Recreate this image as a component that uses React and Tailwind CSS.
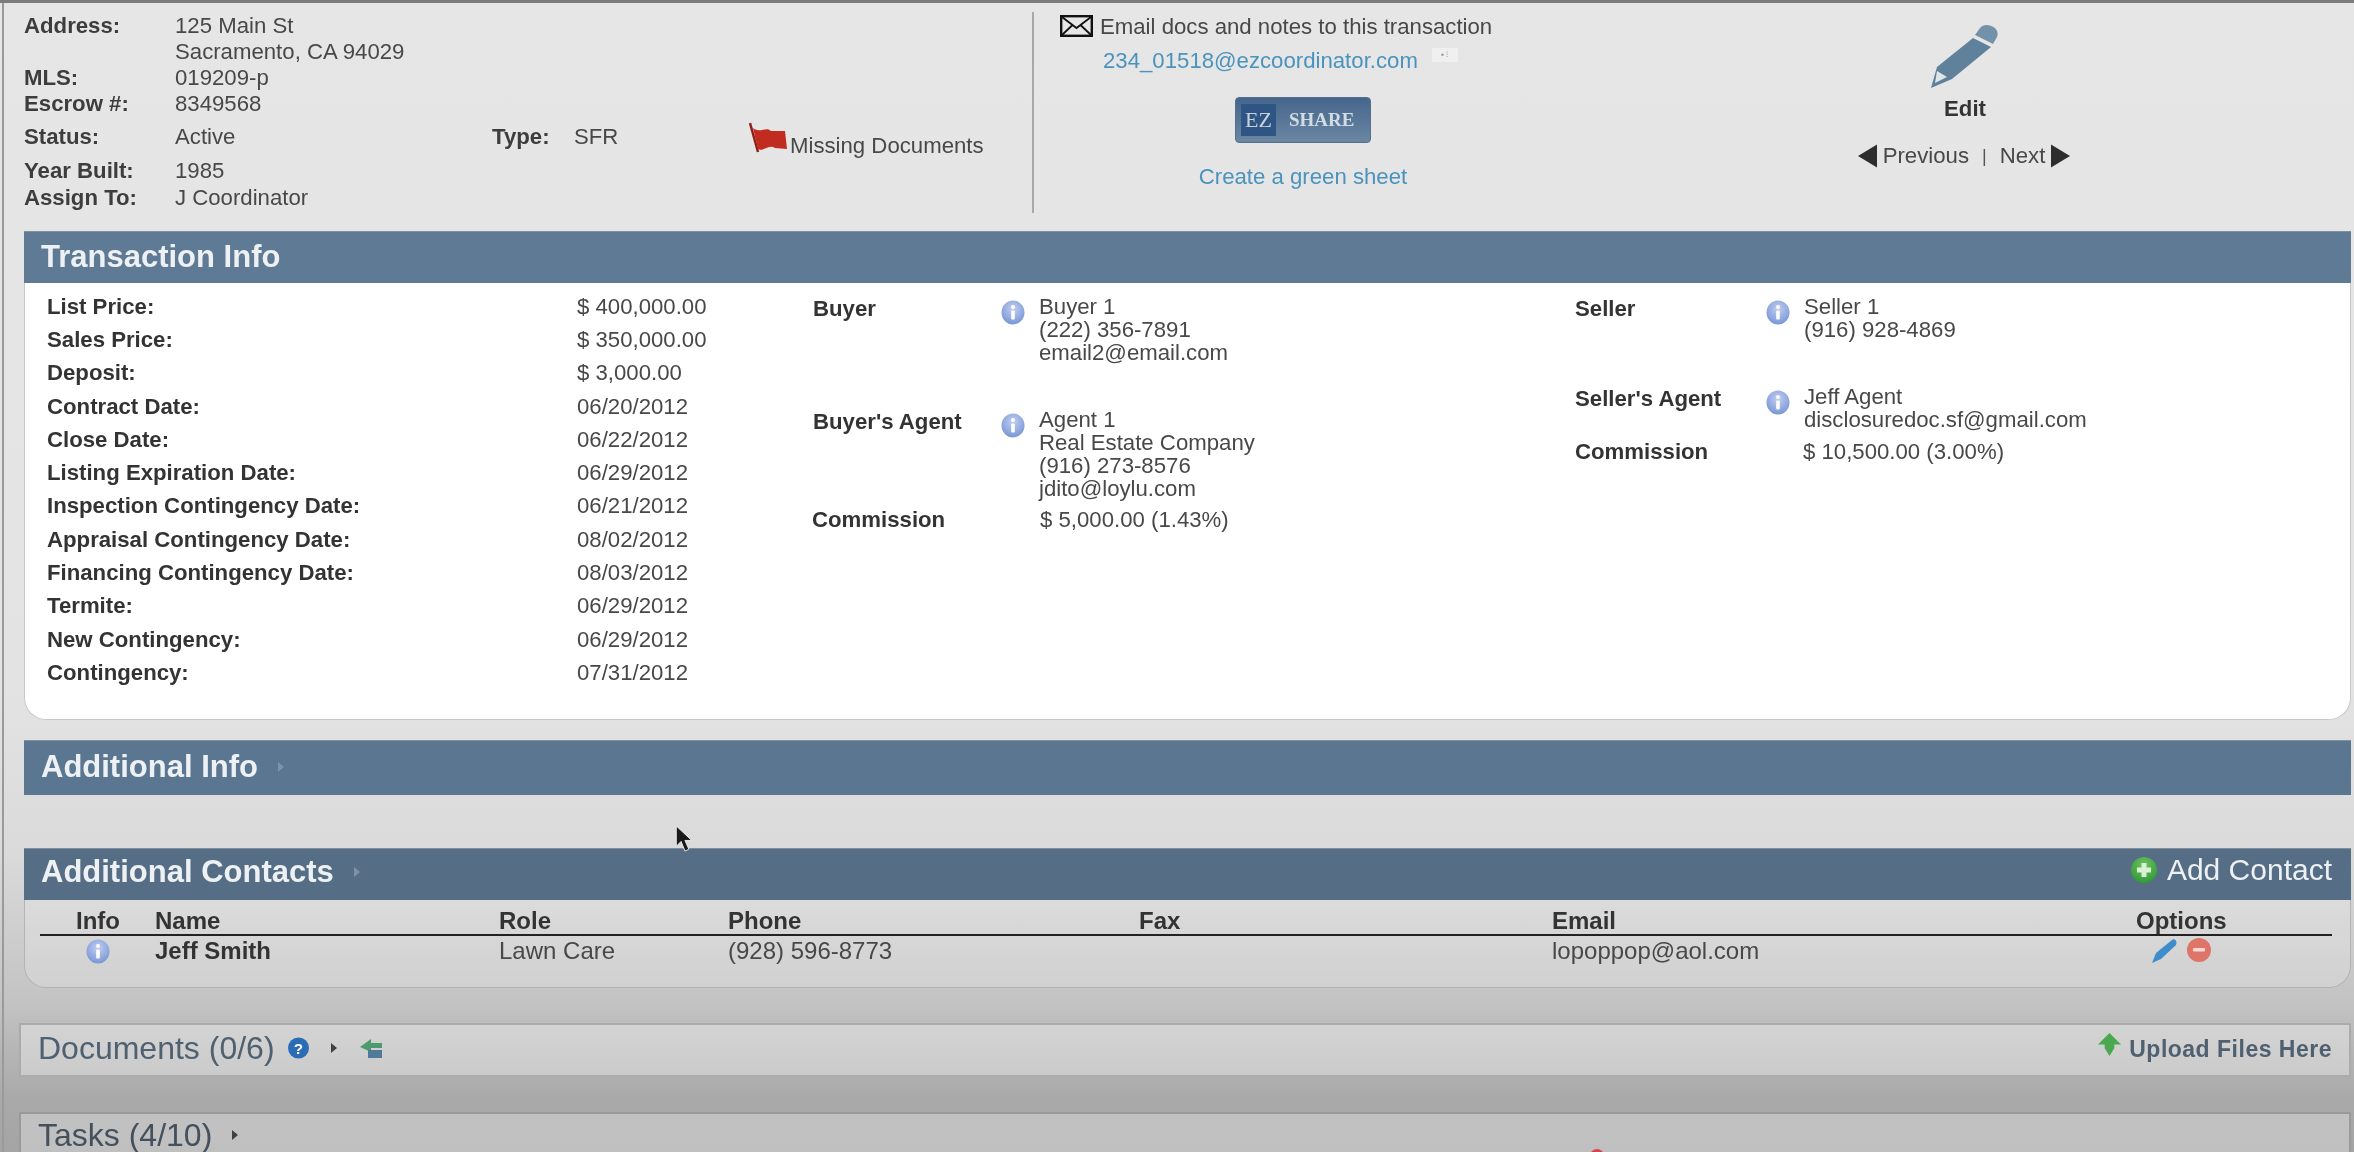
import React from "react";

const font = { fontFamily: '"Liberation Sans", Arial, sans-serif' };

function Info({ className = "" }) {
  return (
    <svg viewBox="0 0 24 25" className={"w-[24px] h-[25px] shrink-0 " + className}>
      <defs>
        <radialGradient id="ig" cx="50%" cy="35%" r="70%">
          <stop offset="0%" stopColor="#c3cff0" />
          <stop offset="100%" stopColor="#7292d4" />
        </radialGradient>
      </defs>
      <ellipse cx="12" cy="12.5" rx="11.5" ry="12" fill="url(#ig)" />
      <circle cx="12" cy="7" r="2" fill="#fff" />
      <rect x="10.2" y="10.5" width="3.6" height="9" rx="1" fill="#fff" />
    </svg>
  );
}

function Bar({ title, arrow, right, className }) {
  return (
    <div className={"flex items-center justify-between border-t border-[#7f8f9d] pl-[17px] pr-[19px] " + className}>
      <div className="flex items-center">
        <span className="text-[31px] font-bold text-[#eef1f4] leading-[36px]">{title}</span>
        {arrow && (
          <svg viewBox="0 0 6 10" className="w-[6px] h-[10px] ml-[20px]">
            <path d="M0 0 L6 5 L0 10 Z" fill="#7d93a8" />
          </svg>
        )}
      </div>
      {right}
    </div>
  );
}

const dates = [
  ["List Price:", "$ 400,000.00"],
  ["Sales Price:", "$ 350,000.00"],
  ["Deposit:", "$ 3,000.00"],
  ["Contract Date:", "06/20/2012"],
  ["Close Date:", "06/22/2012"],
  ["Listing Expiration Date:", "06/29/2012"],
  ["Inspection Contingency Date:", "06/21/2012"],
  ["Appraisal Contingency Date:", "08/02/2012"],
  ["Financing Contingency Date:", "08/03/2012"],
  ["Termite:", "06/29/2012"],
  ["New Contingency:", "06/29/2012"],
  ["Contingency:", "07/31/2012"],
];

function Party({ label, lines, h, labelW }) {
  return (
    <div className={"flex " + h}>
      <div className={"font-bold text-[#333] leading-[24px] mt-[8px] shrink-0 " + labelW}>{label}</div>
      <Info className="mt-[11px]" />
      <div className="ml-[14px] leading-[23px] mt-[6px]">
        {lines.map((l) => (
          <div key={l}>{l}</div>
        ))}
      </div>
    </div>
  );
}

function Commission({ value, className }) {
  return (
    <div className={"flex leading-[24px] " + className}>
      <div className="font-bold text-[#333] shrink-0 w-[228px]">Commission</div>
      <div>{value}</div>
    </div>
  );
}

const hdrRows = [
  ["Address:", "125 Main St"],
  ["", "Sacramento, CA 94029"],
  ["MLS:", "019209-p"],
  ["Escrow #:", "8349568"],
];

const cols = "grid grid-cols-[115px_344px_229px_411px_413px_584px_1fr]";

export default function App() {
  return (
    <div
      style={font}
      className="relative h-[1152px] w-[2354px] overflow-hidden text-[22.2px] leading-[24px] text-[#484848] border-t-[3px] border-[#7c7c7c] blur-[0.4px] bg-[linear-gradient(180deg,#e6e6e6_0%,#e3e3e3_60%,#dadada_74%,#c3c3c3_87%,#aaaaaa_95%,#a4a4a4_100%)]"
    >
      <div className="border-l-[2px] border-[#9a9a9a] h-full ml-[2px] pl-[20px] pr-[3px]">
        {/* top header */}
        <div className="h-[228px] flex">
          <div className="w-[1008px] pt-[10px] shrink-0">
            {hdrRows.map(([a, b]) => (
              <div key={b} className="flex items-center h-[26px]">
                <div className="w-[151px] font-bold text-[#3d3d3d] shrink-0">{a}</div>
                <div>{b}</div>
              </div>
            ))}
            <div className="flex items-center h-[40px]">
              <div className="w-[151px] font-bold text-[#3d3d3d] shrink-0">Status:</div>
              <div className="w-[317px]">Active</div>
              <div className="w-[82px] font-bold text-[#3d3d3d]">Type:</div>
              <div className="w-[175px]">SFR</div>
              <div className="flex items-start self-start">
                <svg viewBox="0 0 40 32" className="w-[40px] h-[32px] mt-[5px] shrink-0">
                  <path d="M1 1 L9 30" stroke="#8f2018" strokeWidth="2.5" />
                  <path d="M4 6 C12 12 16 4 22 9 L36 9 L38 27 L26 26 C20 22 14 30 9 27 Z" fill="#c22b20" />
                </svg>
                <span className="mt-[17px] ml-[1px]">Missing Documents</span>
              </div>
            </div>
            <div className="flex items-center h-[28px]">
              <div className="w-[151px] font-bold text-[#3d3d3d] shrink-0">Year Built:</div>
              <div>1985</div>
            </div>
            <div className="flex items-center h-[26px]">
              <div className="w-[151px] font-bold text-[#3d3d3d] shrink-0">Assign To:</div>
              <div>J Coordinator</div>
            </div>
          </div>

          <div className="w-[720px] shrink-0 border-l-[2px] border-[#a8a8a8] h-[201px] mt-[9px] pt-[3px]">
            <div className="flex items-center pl-[26px]">
              <svg viewBox="0 0 33 22" className="w-[33px] h-[22px] mr-[7px] -mt-[2px]">
                <rect x="1.2" y="1.2" width="30.6" height="19.6" fill="none" stroke="#111" strokeWidth="2.4" />
                <path d="M2 2 L16.5 13 L31 2 M2 20 L12.5 10 M31 20 L20.5 10" fill="none" stroke="#111" strokeWidth="1.8" />
              </svg>
              <span>Email docs and notes to this transaction</span>
            </div>
            <div className="flex items-start pl-[69px] mt-[10px]">
              <span className="text-[#4a93bd]">234_01518@ezcoordinator.com</span>
              <div className="ml-[14px] w-[26px] h-[14px] -mt-[1px] bg-[#f0f0f0] text-[#8a8a8a] text-[8px] leading-[14px] text-center">▪ ⁝</div>
            </div>
            <div
              className="w-[136px] h-[46px] ml-[201px] mt-[24px] rounded-[4px] border border-[#55708d] bg-gradient-to-b from-[#45668b] to-[#6b87a3] flex items-center pl-[5px]"
              style={{ fontFamily: '"Liberation Serif", serif' }}
            >
              <div className="w-[35px] h-[32px] bg-[#2f5585] text-[#c7d2dd] text-[22px] flex items-center justify-center">EZ</div>
              <span className="ml-[13px] text-[#d3dbe3] font-bold text-[19px]">SHARE</span>
            </div>
            <div className="text-center w-[538px] mt-[22px] text-[#4a93bd]">Create a green sheet</div>
          </div>

          <div className="w-[424px] shrink-0 flex flex-col items-center pt-[20px]">
            <svg viewBox="0 0 69 65" className="w-[69px] h-[65px]">
              <path d="M50 5 C55 -2 71 4 67 14 L63 21 L45 12 Z" fill="#7491aa" />
              <path d="M43 15 L61 24 L22 56 L1 65 L7 44 Z" fill="#5f819c" />
              <path d="M7 48 L17 54 L5 60 Z" fill="#dfe6ea" />
            </svg>
            <div className="font-bold text-[#333] mt-[9px] pl-[2px]">Edit</div>
            <div className="flex items-center mt-[23px]">
              <svg viewBox="0 0 20 24" className="w-[19px] h-[24px] mr-[6px]"><path d="M20 0 L0 12 L20 24 Z" fill="#2d2d2d" /></svg>
              <span>Previous</span>
              <span className="mx-[13px] text-[#555] text-[18px]">|</span>
              <span>Next</span>
              <svg viewBox="0 0 20 24" className="w-[19px] h-[24px] ml-[6px]"><path d="M0 0 L20 12 L0 24 Z" fill="#2d2d2d" /></svg>
            </div>
          </div>
        </div>

        {/* Transaction info */}
        <Bar title="Transaction Info" className="h-[52px] bg-[#5e7a94] pb-[2px]" />
        <div className="h-[437px] bg-white rounded-b-[22px] border border-t-0 border-[#c8c8c8] flex pt-[7px]">
          <div className="w-[788px] shrink-0 pl-[22px]">
            {dates.map(([a, b]) => (
              <div key={a} className="flex items-center h-[33.3px]">
                <div className="w-[530px] font-bold text-[#333] shrink-0">{a}</div>
                <div>{b}</div>
              </div>
            ))}
          </div>
          <div className="w-[762px] shrink-0 -mt-[1px]">
            <Party label="Buyer" h="h-[113px]" labelW="w-[188px]" lines={["Buyer 1", "(222) 356-7891", "email2@email.com"]} />
            <Party label="Buyer's Agent" h="h-[106px]" labelW="w-[188px]" lines={["Agent 1", "Real Estate Company", "(916) 273-8576", "jdito@loylu.com"]} />
            <Commission value="$ 5,000.00 (1.43%)" className="-ml-[1px]" />
          </div>
          <div className="flex-1 -mt-[1px]">
            <Party label="Seller" h="h-[90px]" labelW="w-[191px]" lines={["Seller 1", "(916) 928-4869"]} />
            <Party label="Seller's Agent" h="h-[61px]" labelW="w-[191px]" lines={["Jeff Agent", "disclosuredoc.sf@gmail.com"]} />
            <Commission value="$ 10,500.00 (3.00%)" />
          </div>
        </div>

        {/* Additional info */}
        <div className="mt-[20px]">
          <Bar title="Additional Info" arrow className="h-[55px] bg-[#5b7690] pb-[2px]" />
        </div>

        {/* Additional contacts */}
        <div className="mt-[53px]">
          <Bar
            title="Additional Contacts"
            arrow
            className="h-[52px] bg-[#566e85] pb-[5px]"
            right={
              <div className="flex items-center -translate-y-[2px]">
                <svg viewBox="0 0 26 26" className="w-[26px] h-[26px] mr-[10px]">
                  <defs>
                    <radialGradient id="gg" cx="50%" cy="30%" r="70%">
                      <stop offset="0%" stopColor="#6fc35f" />
                      <stop offset="100%" stopColor="#2f9a35" />
                    </radialGradient>
                  </defs>
                  <circle cx="13" cy="13" r="13" fill="url(#gg)" />
                  <path d="M10.5 6 h5 v4.5 h4.5 v5 h-4.5 v4.5 h-5 v-4.5 h-4.5 v-5 h4.5 Z" fill="#d9f0d6" />
                </svg>
                <span className="text-[30px] leading-[36px] text-[#eef1f4]">Add Contact</span>
              </div>
            }
          />
        </div>
        <div className="h-[88px] rounded-b-[22px] border border-t-0 border-[#b4b4b4] bg-white/20 pl-[15px] pr-[18px] text-[24px]">
          <div className={cols + " font-bold text-[#333] border-b-[2px] border-[#222] h-[36px] pt-[8px] items-center"}>
            <div className="pl-[36px]">Info</div>
            <div>Name</div>
            <div>Role</div>
            <div>Phone</div>
            <div>Fax</div>
            <div>Email</div>
            <div>Options</div>
          </div>
          <div className={cols + " h-[30px] items-center"}>
            <div className="pl-[46px]"><Info /></div>
            <div className="font-bold text-[#333]">Jeff Smith</div>
            <div>Lawn Care</div>
            <div>(928) 596-8773</div>
            <div></div>
            <div>lopoppop@aol.com</div>
            <div className="flex items-center gap-[8px] pl-[15px]">
              <svg viewBox="0 0 28 26" className="w-[28px] h-[26px]">
                <path d="M21 2 C23 0 27 3 25 7 L10 21 L1 25 L5 15 Z" fill="#3e8ccb" />
              </svg>
              <svg viewBox="0 0 24 24" className="w-[24px] h-[24px] -mt-[2px]">
                <circle cx="12" cy="12" r="12" fill="#df7468" />
                <rect x="6" y="10" width="12" height="3.6" rx="1" fill="#f6dad6" />
              </svg>
            </div>
          </div>
        </div>

        {/* Documents */}
        <div className="mt-[35px] -ml-[5px] h-[54px] border-2 border-[#ababab] bg-white/35 flex items-center justify-between pl-[17px] pr-[17px]">
          <div className="flex items-center pb-[5px]">
            <span className="text-[32px] leading-[36px] text-[#4f6070]">Documents (0/6)</span>
            <svg viewBox="0 0 22 22" className="w-[21px] h-[22px] ml-[13px]">
              <circle cx="11" cy="11" r="11" fill="#2a6cb6" />
              <text x="11" y="17" textAnchor="middle" fontSize="16" fontWeight="700" fill="#fff" fontFamily="Liberation Sans">?</text>
            </svg>
            <svg viewBox="0 0 6 10" className="w-[6px] h-[10px] ml-[22px]"><path d="M0 0 L6 5 L0 10 Z" fill="#404040" /></svg>
            <svg viewBox="0 0 27 22" className="w-[27px] h-[22px] ml-[20px]">
              <path d="M3 10 L14 2 L14 6 L25 6 L25 11 L14 11 L14 15 Z" fill="#4f9a6c" />
              <path d="M11 13 L25 13 L25 21 L11 21 Z" fill="#52789a" />
            </svg>
          </div>
          <div className="flex items-center pb-[3px]">
            <svg viewBox="0 0 26 26" className="w-[25px] h-[25px] mr-[7px] -mt-[8px]">
              <path d="M13 1 L25 13 L18 13 L18 17 L13 25 L8 17 L8 13 L1 13 Z" fill="#4aa84e" />
            </svg>
            <span className="font-bold text-[#4f6070] text-[23px] tracking-[0.5px]">Upload Files Here</span>
          </div>
        </div>

        {/* Tasks */}
        <div className="mt-[35px] -ml-[5px] h-[60px] border-2 border-[#9a9a9a] bg-white/30 flex items-start pl-[17px] pt-[5px]">
          <span className="text-[32px] leading-[32px] text-[#44505c]">Tasks (4/10)</span>
          <svg viewBox="0 0 6 10" className="w-[6px] h-[10px] ml-[20px] mt-[11px]"><path d="M0 0 L6 5 L0 10 Z" fill="#404040" /></svg>
        </div>
      </div>

      {/* mouse cursor */}
      <svg viewBox="0 0 18 30" className="absolute left-[675px] top-[822px] w-[18px] h-[29px]">
        <path d="M1 1 L1 22 L6 17 L10 27 L14 25 L10 16 L17 16 Z" fill="#1a1a1a" stroke="#e8e8e8" strokeWidth="1" />
      </svg>
      {/* red dot at the bottom edge */}
      <div className="absolute left-[1590px] top-[1146px] w-[14px] h-[14px] rounded-full bg-[#d9434f]" />
    </div>
  );
}
